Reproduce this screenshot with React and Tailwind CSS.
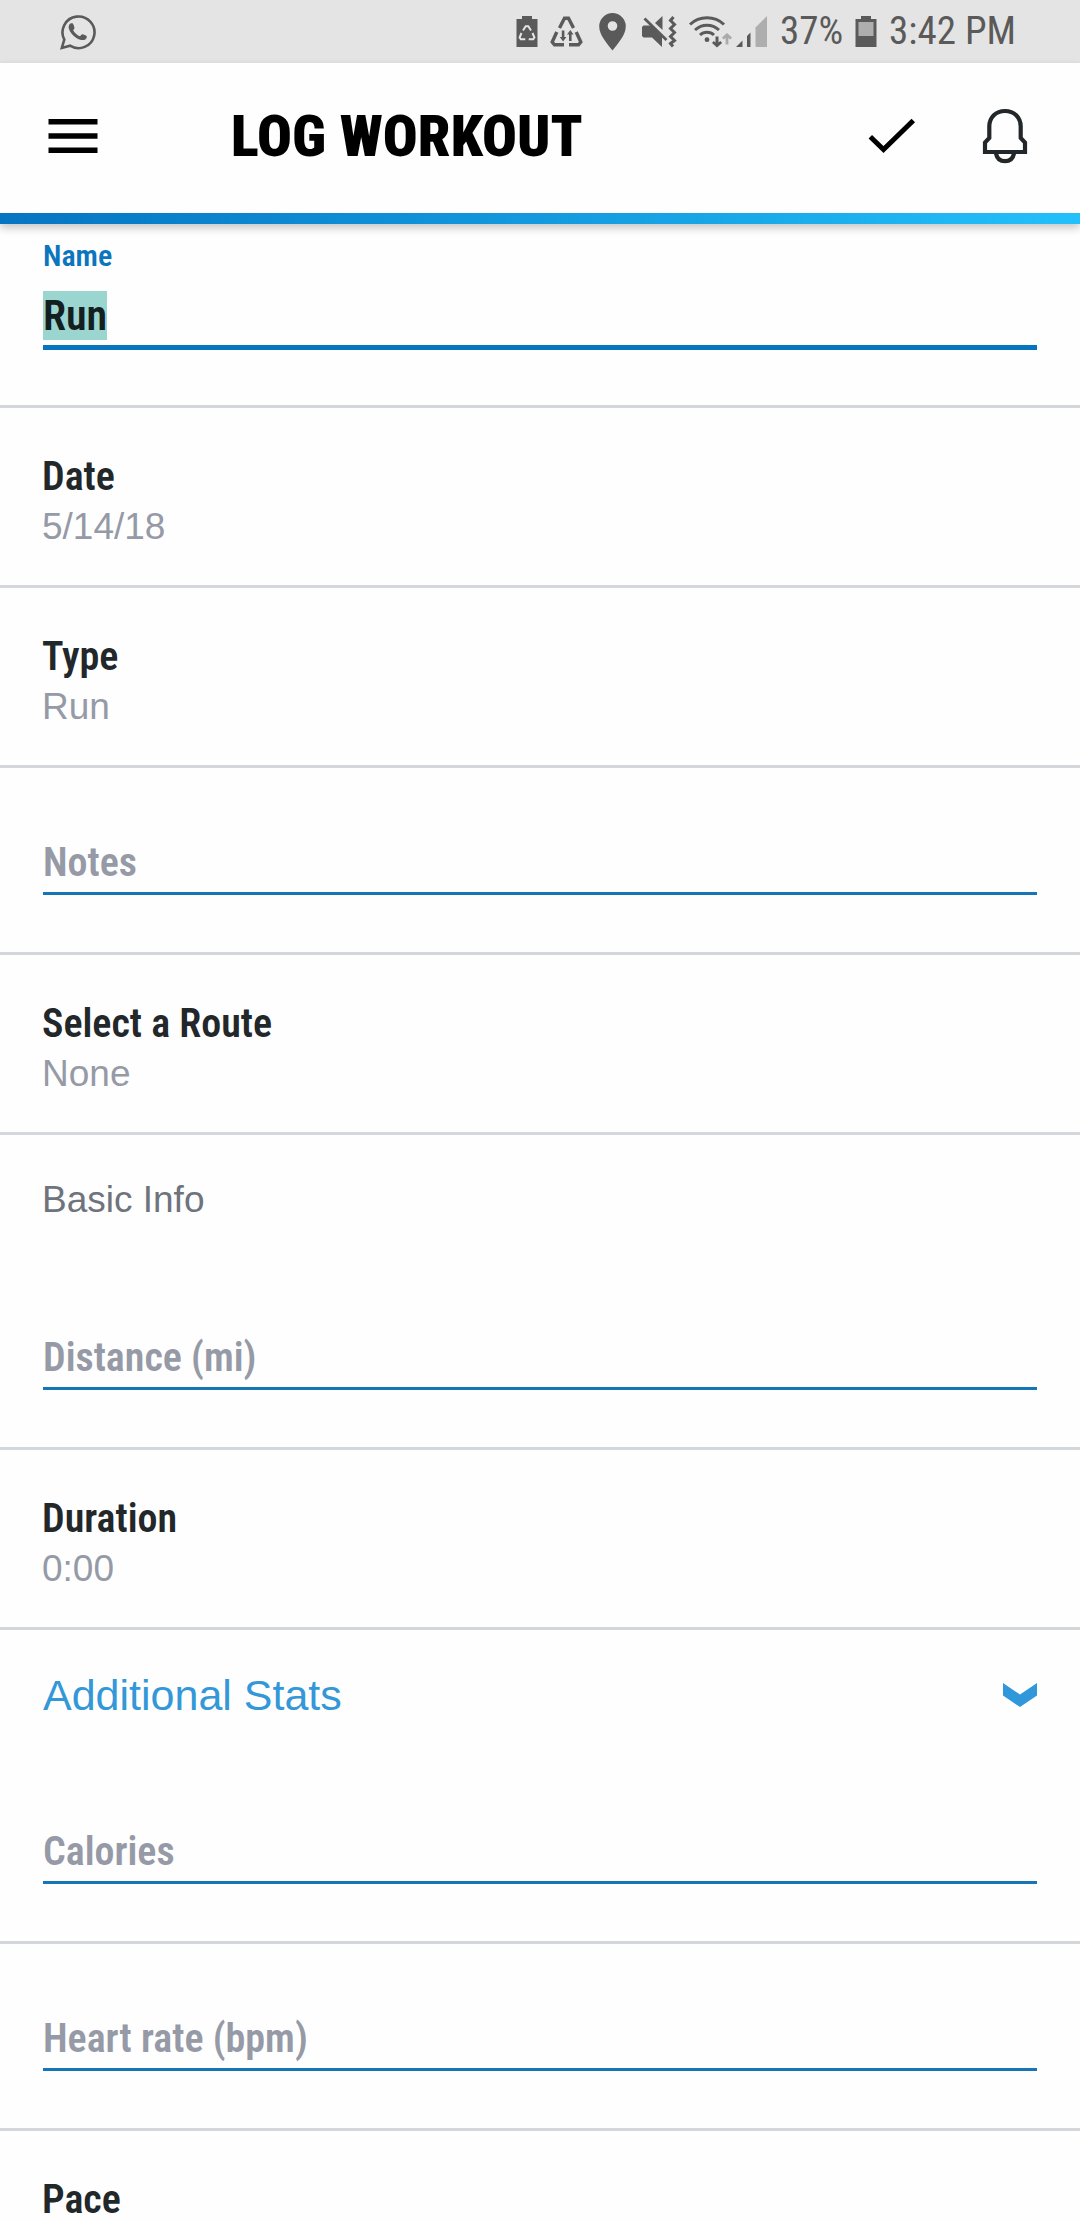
import { useEffect, useRef } from "react";

const NARROW = "font-['Roboto_Condensed',Roboto,sans-serif]";
const REGULAR = "font-['Liberation_Sans',sans-serif]";

function WhatsAppIcon() {
  return (
    <svg width="36" height="36" viewBox="0 0 36 36" fill="none" aria-hidden="true">
      <path d="M1.800 34 4.300 25.600A16 15.800 0 1 1 10 31.700Z" stroke="#5a5a5a" strokeWidth="2.600" />
      <path d="M9.300 10.700C10 9.400 11.700 9 12.900 9.500C13.700 11 14.300 12.500 14.500 14C14.300 15 13.500 15.600 13.200 16.300C14.700 19 17 21 19.800 22.300C20.800 21.800 21.300 20.600 22.300 20.300C24 20.600 25.600 21.300 26.800 22.300C26.900 23.800 26.300 25 25 25.700C22.300 26.600 19 25.800 16 23.700C12.600 21.200 9.700 18 8.800 14.500C8.500 13 8.700 11.700 9.300 10.700Z" fill="#5a5a5a" />
    </svg>
  );
}

function RecycleBatteryIcon() {
  return (
    <svg width="22" height="32" viewBox="0 0 22 32" aria-hidden="true">
      <path d="M6 3V0h10v3h5.500v28H0.500V3Z" fill="#5a5a5a" />
      <g fill="none" stroke="#e4e4e4" strokeWidth="2">
        <path d="M7 14.500 9.700 10.300H12.300L15 14.500" />
        <path d="M5.500 17 3.600 21.500 4.800 23.300H9.300" />
        <path d="M16.500 17 18.400 21.500 17.200 23.300H12.700" />
      </g>
      <path d="M7 18 11 13.500 15 18H12.500V21H9.500V18Z" fill="#5a5a5a" />
    </svg>
  );
}

function RecycleIcon() {
  return (
    <svg width="33" height="32" viewBox="0 0 33 32" aria-hidden="true">
      <g fill="none" stroke="#5a5a5a" strokeWidth="3.400">
        <path d="M9.500 12 14.500 2.200H18.500L23.500 12" />
        <path d="M6.800 16 2.200 26 4.500 28.800H14" />
        <path d="M26.200 16 30.800 26 28.500 28.800H19" />
      </g>
      <path d="M11.800 14.500h2.600v6.500h2l-3.300 4.500-3.300-4.500h2Z" fill="#5a5a5a" />
      <path d="M19 25h2.600v-6.500h2L20.300 14 17 18.500h2Z" fill="#5a5a5a" />
    </svg>
  );
}

function PinIcon() {
  return (
    <svg width="27" height="38" viewBox="0 0 27 38" aria-hidden="true">
      <path fillRule="evenodd" d="M13.500 0A13.300 13.300 0 0 1 26.800 13.300C26.800 22.500 18.500 31 13.500 37.500C8.500 31 .2 22.500 .2 13.300A13.300 13.300 0 0 1 13.500 0ZM13.500 8.200A4.800 4.800 0 1 0 13.500 17.800A4.800 4.800 0 1 0 13.500 8.200Z" fill="#5a5a5a" />
    </svg>
  );
}

function MuteIcon() {
  return (
    <svg width="35" height="32" viewBox="0 0 35 32" aria-hidden="true">
      <path d="M1.500 9.500H9L20 21v10L10 21.500H1.500L0 20V11Z" fill="#5a5a5a" />
      <path d="M20.500 0V14L13 7Z" fill="#5a5a5a" />
      <path d="M2.500 2.500 24.500 24" stroke="#5a5a5a" strokeWidth="2.800" />
      <path d="M31.500 1 28.500 4.500 32.500 8.500 28.500 12.500 32.500 16.500 28.500 20.500 32.500 24.500 28.500 27.500 31 30.500" fill="none" stroke="#5a5a5a" strokeWidth="3" />
    </svg>
  );
}

function WifiIcon() {
  return (
    <svg width="43" height="32" viewBox="0 0 43 32" fill="none" aria-hidden="true">
      <g stroke="#5a5a5a" strokeWidth="3">
        <path d="M1 8.500C10.500 -.5 25.500 -.5 35 8.500" />
        <path d="M6 14C13 7.500 23 7.500 30 14" />
        <path d="M11 19C15 15.200 21 15.200 25 19" />
      </g>
      <circle cx="18" cy="23.700" r="2.400" fill="#5a5a5a" />
      <path d="M26.500 20.500h3v6l1.800-1.500 1.800 2L28 31.500 23 27l1.800-2 1.700 1.500Z" fill="#5a5a5a" />
      <path d="M36.600 28.500h2.800v-6.500l2 1.500 1.600-2L38 17 33 21.500l1.600 2 2-1.500Z" fill="#aaaaaa" />
    </svg>
  );
}

function SignalIcon() {
  return (
    <svg width="32" height="32" viewBox="0 0 32 32" aria-hidden="true">
      <path d="M0 31 6.500 24.500V31Z" fill="#5a5a5a" />
      <path d="M11 20 14.500 16.500V31H11Z" fill="#5a5a5a" />
      <path d="M19.500 11.500 31 0V31H19.500Z" fill="#aeaeae" />
    </svg>
  );
}

function BatteryIcon() {
  return (
    <svg width="22" height="32" viewBox="0 0 22 32" aria-hidden="true">
      <path d="M6 3V0h10v3h5.500v28H0.500V3Z" fill="#5a5a5a" />
      <path d="M3.500 6H18.500V20H3.500Z" fill="#aeaeae" />
    </svg>
  );
}

function StatusBar() {
  return (
    <div className="flex h-[63px] items-center justify-between bg-[#e4e4e4] pr-16 pl-[60px]">
      <WhatsAppIcon />
      <div className={`flex items-center text-[39px] leading-none text-[#5a5a5a] ${NARROW}`}>
        <div className="mr-3 flex items-center">
          <div className="flex items-center gap-3">
            <RecycleBatteryIcon />
            <RecycleIcon />
          </div>
          <div className="mx-4 flex">
            <PinIcon />
          </div>
          <div className="flex items-center gap-3">
            <MuteIcon />
            <WifiIcon />
          </div>
          <div className="ml-1 flex">
            <SignalIcon />
          </div>
        </div>
        <span>37%</span>
        <div className="mx-3 flex">
          <BatteryIcon />
        </div>
        <span>3:42 PM</span>
      </div>
    </div>
  );
}

function Header() {
  return (
    <header className="shadow-[0_4px_8px_rgba(0,0,0,0.22)]">
      <div className="flex h-[150px] items-center pr-[52px] pb-1 pl-12">
        <button type="button" aria-label="Open menu" className="mr-[133px]">
          <svg width="50" height="36" viewBox="0 0 50 36" aria-hidden="true">
            <path d="M.5 1h49v5.500H.5ZM.5 15.200h49v5.500H.5ZM.5 29.400h49v5.500H.5Z" fill="#000" />
          </svg>
        </button>
        <h1 className={`flex-1 text-[58px] leading-none font-black text-black ${NARROW}`}>LOG WORKOUT</h1>
        <button type="button" aria-label="Save workout" className="mr-[66px]">
          <svg width="48" height="36" viewBox="0 0 48 36" aria-hidden="true">
            <path d="M2.300 18.800 15.500 31.500 45.300 2.500" fill="none" stroke="#000" strokeWidth="5" />
          </svg>
        </button>
        <button type="button" aria-label="Notifications">
          <svg width="46" height="56" viewBox="0 0 46 56" fill="none" stroke="#22272a" strokeWidth="4.200" aria-hidden="true">
            <path d="M7.300 30V18.500C7.300 9 14 3 23 3S38.700 9 38.700 18.500V30L43 34.500V44H3V34.500Z" />
            <path d="M14 45.500C15 50.500 18.500 53.200 23 53.200S31 50.500 32 45.500" />
          </svg>
        </button>
      </div>
      <div className="h-[11px] bg-linear-to-r from-[#0675c1] to-[#23c0fb]" />
    </header>
  );
}

function ValueRow({ label, value }) {
  return (
    <button type="button" className="block w-full border-b-3 border-[#d3d6db] px-[42px] pt-[49px] pb-[33px] text-left">
      <span className={`block text-[40px] leading-[40px] font-semibold text-[#22272a] ${NARROW}`}>{label}</span>
      {value && <span className={`mt-[5px] block text-[37px] leading-[50px] text-[#959aa6] ${REGULAR}`}>{value}</span>}
    </button>
  );
}

function FieldRow({ label }) {
  return (
    <div className="border-b-3 border-[#d3d6db] px-[43px] pt-[68px] pb-[57px]">
      <input
        type="text"
        aria-label={label}
        placeholder={label}
        className={`block h-[59px] w-full border-b-3 border-[#1676b5] pb-0.5 text-[40px] font-semibold text-[#22272a] outline-none placeholder:text-[#959aa6] ${NARROW}`}
      />
    </div>
  );
}

function NameRow() {
  const input = useRef(null);
  useEffect(() => {
    input.current.focus();
    input.current.select();
  }, []);
  return (
    <div className="border-b-3 border-[#d3d6db] px-[43px] pt-[11px] pb-[55px]">
      <label htmlFor="name" className={`block text-[30px] leading-[42px] font-semibold text-[#0b75bd] ${NARROW}`}>
        Name
      </label>
      <input
        ref={input}
        id="name"
        type="text"
        defaultValue="Run"
        className={`mt-[9px] block h-[64px] w-full border-b-5 border-[#0775bd] text-[42px] leading-[51px] font-semibold text-[#13201f] outline-none selection:bg-[#9ad5cf] selection:text-[#13201f] ${NARROW}`}
      />
    </div>
  );
}

export default function App() {
  return (
    <div className="h-screen overflow-hidden bg-[#fefefe]">
      <StatusBar />
      <Header />
      <main>
        <NameRow />
        <ValueRow label="Date" value="5/14/18" />
        <ValueRow label="Type" value="Run" />
        <FieldRow label="Notes" />
        <ValueRow label="Select a Route" value="None" />
        <h2 className={`px-[42px] pt-10 pb-[38px] text-[37px] leading-[50px] text-[#6e737c] ${REGULAR}`}>Basic Info</h2>
        <FieldRow label="Distance (mi)" />
        <ValueRow label="Duration" value="0:00" />
        <button
          type="button"
          aria-expanded="true"
          className={`flex w-full items-center justify-between px-[43px] pt-10 pb-[37px] text-[43px] leading-[50px] text-[#3498d8] ${REGULAR}`}
        >
          Additional Stats
          <svg width="34" height="24" viewBox="0 0 34 24" aria-hidden="true">
            <path d="M0 0 17 11.500 34 0V12.500L17 24 0 12.500Z" fill="#3098da" />
          </svg>
        </button>
        <FieldRow label="Calories" />
        <FieldRow label="Heart rate (bpm)" />
        <ValueRow label="Pace" />
      </main>
    </div>
  );
}
